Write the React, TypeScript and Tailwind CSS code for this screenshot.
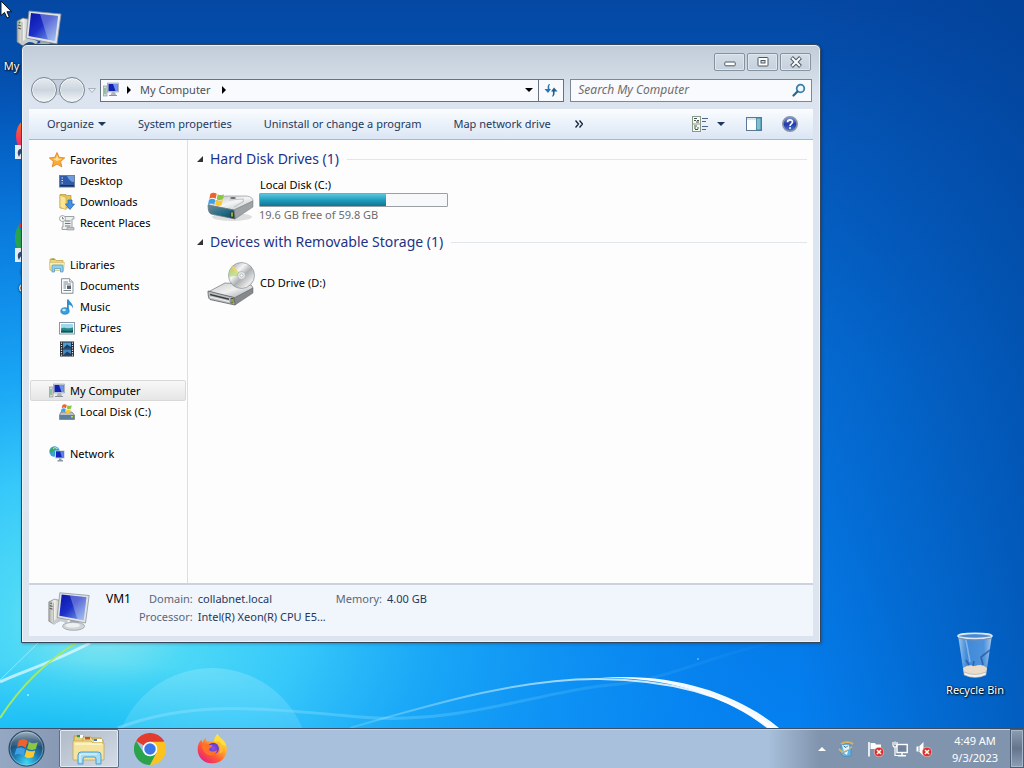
import React, { useState } from 'react';

interface IconProps {
  className?: string;
}

const WindowsFlag: React.FC = () => (
  <g>
    <path d="M2 4 C5 2 8 2 11 4 L9.500 11 C6.500 9 3.500 9 0.500 11 Z" fill="#f0622a" />
    <path d="M12.500 4.500 C15.500 6.500 18.500 6 21.500 4.500 L20 11.500 C17 13 14 13.500 11 11.500 Z" fill="#8dc63f" />
    <path d="M0 12.500 C3 10.500 6 10.500 9 12.500 L7.500 19.500 C4.500 17.500 1.500 17.500 -1.500 19.500 Z" fill="#3fa0e8" />
    <path d="M10.500 13 C13.500 15 16.500 14.500 19.500 13 L18 20 C15 21.500 12 22 9 20 Z" fill="#fcc830" />
  </g>
);

const ComputerIcon: React.FC<IconProps & { id: string }> = ({ className, id }) => (
  <svg viewBox="0 0 48 48" className={className} aria-hidden="true">
    <defs>
      <linearGradient id={`${id}-screen`} x1="0" y1="0" x2="1" y2="1">
        <stop offset="0" stopColor="#0a14a8" />
        <stop offset="0.450" stopColor="#1c30c8" />
        <stop offset="1" stopColor="#8ab4f0" />
      </linearGradient>
      <linearGradient id={`${id}-tower`} x1="0" y1="0" x2="1" y2="0">
        <stop offset="0" stopColor="#a8aaa4" />
        <stop offset="0.400" stopColor="#f2f2ec" />
        <stop offset="1" stopColor="#a4a8aa" />
      </linearGradient>
    </defs>
    <path d="M2 13 L8 10 L17 12 L17 32 L7 37 L2 34 Z" fill={`url(#${id}-tower)`} stroke="#777b7e" strokeWidth="0.700" />
    <path d="M7 14 V37" stroke="#909496" strokeWidth="0.700" />
    <path d="M3 17 L6 18 M3 20 L6 21" stroke="#555" strokeWidth="1.200" />
    <circle cx="4.500" cy="14.500" r="1" fill="#2f8f3f" />
    <path d="M7 37 C11 31 16 31 22 35" fill="none" stroke="#c6cbcf" strokeWidth="3.500" />
    <path d="M26 31 L34 33 L35 40 L24 39 Z" fill="#aab0b6" />
    <ellipse cx="29" cy="39.500" rx="12" ry="4.500" fill="#d0d5d9" stroke="#8c9196" strokeWidth="0.700" />
    <ellipse cx="28" cy="38.500" rx="8" ry="2.500" fill="#eef0f2" />
    <path d="M14 3 L46 6 L42 36 L11 30 Z" fill="#dfe3e8" stroke="#868d96" strokeWidth="0.800" />
    <path d="M16 5 L43 8 L40 33 L13.500 28 Z" fill={`url(#${id}-screen)`} />
    <path d="M25 6 L43 8 L40 33 L33 31.500 Z" fill="#fff" opacity="0.280" />
  </svg>
);

const SmallComputerIcon: React.FC<IconProps> = ({ className }) => (
  <svg viewBox="0 0 16 16" className={className} aria-hidden="true">
    <rect x="0.500" y="4" width="3.500" height="10" fill="#d4d8dc" stroke="#868c94" strokeWidth="0.600" />
    <path d="M2 6 V12" stroke="#39b54a" strokeWidth="1" />
    <rect x="4.500" y="1" width="11" height="9" fill="#cfd4dc" stroke="#7f8894" strokeWidth="0.500" />
    <rect x="5.500" y="2" width="9" height="7" fill="#1220b4" />
    <path d="M10 2 L14.500 2 L14.500 9 L12.500 9 Z" fill="#6f92ea" />
    <path d="M9 10 H12 L13 13 H7.500 Z" fill="#aeb6be" />
    <path d="M6 13.500 H14" stroke="#89929b" strokeWidth="1" />
  </svg>
);

const StarIcon: React.FC<IconProps> = ({ className }) => (
  <svg viewBox="0 0 16 16" className={className} aria-hidden="true">
    <path d="M8 0.500 L10.200 5.300 L15.700 5.900 L11.600 9.500 L12.800 14.900 L8 12.100 L3.200 14.900 L4.400 9.500 L0.300 5.900 L5.800 5.300 Z" fill="#fbac34" stroke="#d9812a" strokeWidth="0.800" />
    <path d="M8 3 L9.500 6.500 L13 7 L8 9 L4 7 L7 6.300 Z" fill="#ffe39a" />
  </svg>
);

const DesktopIcon: React.FC<IconProps> = ({ className }) => (
  <svg viewBox="0 0 16 16" className={className} aria-hidden="true">
    <rect x="0.500" y="2.500" width="15" height="11.500" fill="#2f5ba8" stroke="#6d7f99" />
    <path d="M8 3 H15 V9 C12 9 10 7 8 3 Z" fill="#6d9be0" />
    <path d="M2.500 5 H4 M2.500 7.500 H4 M2.500 10 H4" stroke="#d4e4fa" />
    <rect x="1" y="12" width="14" height="1.500" fill="#1d2f58" />
  </svg>
);

const DownloadsIcon: React.FC<IconProps> = ({ className }) => (
  <svg viewBox="0 0 16 16" className={className} aria-hidden="true">
    <path d="M1 0.500 H7 V1.500 H12 V14 H1 Z" fill="#e5c65c" stroke="#b8932e" strokeWidth="0.700" />
    <path d="M1 1 L7 3.500 V15.500 L1 13.500 Z" fill="#fae595" stroke="#c29d3c" strokeWidth="0.600" />
    <path d="M9 6 H13 V10 H15.500 L11 15.500 L6.500 10 H9 Z" fill="#3f93e6" stroke="#1f62b0" strokeWidth="0.700" />
  </svg>
);

const RecentIcon: React.FC<IconProps> = ({ className }) => (
  <svg viewBox="0 0 16 16" className={className} aria-hidden="true">
    <path d="M4 1.500 H15 V4 H13 V14.500 H3 V12 H4 Z" fill="#eef0f0" stroke="#868d90" strokeWidth="0.800" />
    <path d="M6 6 H11.500 M6 8.500 H11.500 M6 11 H11.500" stroke="#6f777c" />
    <path d="M8 12.500 H15 V15 H8 Z" fill="#c3c8ca" stroke="#868d90" strokeWidth="0.600" />
    <circle cx="3.500" cy="3.500" r="3" fill="#fafafa" stroke="#8e9598" strokeWidth="0.800" />
    <path d="M3.500 1.800 V3.800 H5" fill="none" stroke="#555" strokeWidth="0.700" />
  </svg>
);

const LibrariesIcon: React.FC<IconProps> = ({ className }) => (
  <svg viewBox="0 0 16 16" className={className} aria-hidden="true">
    <path d="M1 2 H6 L7 3.500 H14 V13 H1 Z" fill="#eed67c" stroke="#bb9b45" strokeWidth="0.700" />
    <rect x="2.500" y="1.500" width="3" height="1.500" fill="#6cb24a" />
    <path d="M0.500 5.500 H15.500 L14.500 13.500 H1.500 Z" fill="#fbeeb0" stroke="#cbb160" strokeWidth="0.500" />
    <path d="M3 15 V9 Q3 8 4 8 H13 Q14 8 14 9 V15 H11.500 V11.500 H5.500 V15 Z" fill="#8fd0ee" stroke="#4597c4" strokeWidth="0.700" />
  </svg>
);

const DocumentsIcon: React.FC<IconProps> = ({ className }) => (
  <svg viewBox="0 0 16 16" className={className} aria-hidden="true">
    <path d="M2.500 0.700 H10.500 L14 4 V15.300 H2.500 Z" fill="#fbfcfd" stroke="#7d8790" strokeWidth="0.900" />
    <path d="M10.500 0.700 V4 H14" fill="#dde3e8" stroke="#7d8790" strokeWidth="0.700" />
    <path d="M4.500 4 H9 M4.500 6 H12 M4.500 8 H7 M4.500 10 H7 M4.500 12.500 H12" stroke="#6c7884" strokeWidth="0.900" />
    <rect x="8" y="7.500" width="4" height="3.500" fill="#59636e" />
  </svg>
);

const MusicIcon: React.FC<IconProps> = ({ className }) => (
  <svg viewBox="0 0 16 16" className={className} aria-hidden="true">
    <path d="M8 0.500 H9.800 C10.200 3.200 14.500 4 14 9.500 C13 6.800 11.500 6 9.800 5.700 V12 H8 Z" fill="#2b8fd0" />
    <ellipse cx="6" cy="12" rx="4.200" ry="3.300" fill="#35a0dd" stroke="#1b6ea6" strokeWidth="0.600" />
    <ellipse cx="5" cy="11" rx="1.800" ry="1.200" fill="#bfe6fa" />
  </svg>
);

const PicturesIcon: React.FC<IconProps> = ({ className }) => (
  <svg viewBox="0 0 16 16" className={className} aria-hidden="true">
    <rect x="0.500" y="2.500" width="15" height="11.500" fill="#fff" stroke="#8a98a5" />
    <rect x="2" y="4" width="12" height="8.500" fill="#9fd8ee" />
    <path d="M2 8.500 C5 6.500 8 9.500 14 7.500 V12.500 H2 Z" fill="#2a8a86" />
    <path d="M2 11 C6 9.500 10 12 14 10 V12.500 H2 Z" fill="#12585e" />
  </svg>
);

const VideosIcon: React.FC<IconProps> = ({ className }) => (
  <svg viewBox="0 0 16 16" className={className} aria-hidden="true">
    <rect x="1" y="0.500" width="14" height="15" fill="#242a33" />
    <rect x="4" y="1.500" width="8" height="6" fill="#4f9bd2" />
    <rect x="4" y="8.500" width="8" height="6" fill="#4688be" />
    <path d="M4 7.500 L8 3.500 L12 6 V7.500 Z M4 14.500 L8 10.500 L12 13 V14.500 Z" fill="#1f3f66" />
    <path d="M2.500 1.500 V15 M13.500 1.500 V15" stroke="#e6ebf0" strokeWidth="1.200" strokeDasharray="1.200 1.200" />
  </svg>
);

const SmallDriveIcon: React.FC<IconProps> = ({ className }) => (
  <svg viewBox="0 0 16 16" className={className} aria-hidden="true">
    <path d="M2 8 H13 L15.500 11 V15.500 H0.500 V11 Z" fill="#b9c0c7" stroke="#6b747d" strokeWidth="0.700" />
    <rect x="0.800" y="11" width="14.400" height="4.200" fill="#5c7f9c" />
    <rect x="12" y="12" width="2" height="1.500" fill="#b8e04a" />
    <g transform="translate(2.500 -1) scale(0.480)">
      <WindowsFlag />
    </g>
  </svg>
);

const NetworkIcon: React.FC<IconProps> = ({ className }) => (
  <svg viewBox="0 0 16 16" className={className} aria-hidden="true">
    <circle cx="5.500" cy="5.500" r="5.200" fill="#3aa4d8" />
    <path d="M1 4 C3 1 6 0 8 1.500 C7 4 4 4 3 7 C1.500 7 1 5.500 1 4 Z" fill="#3fa65a" />
    <path d="M4 2.500 C6 1 8 2 8.500 3" fill="none" stroke="#d9f3fb" />
    <rect x="6" y="4.500" width="9.700" height="8" fill="#c8cfd8" />
    <rect x="7" y="5.300" width="7.800" height="6.200" fill="#1426b8" />
    <path d="M11 5.300 H14.800 V11.500 H13 Z" fill="#5c84e4" />
    <path d="M10 12.500 H12.500 V14 H14 V15.500 H8.500 V14 H10 Z" fill="#8e98a2" />
  </svg>
);

const HardDriveIcon: React.FC<IconProps> = ({ className }) => (
  <svg viewBox="0 0 48 48" className={className} aria-hidden="true">
    <defs>
      <linearGradient id="hdd-top" x1="0" y1="0" x2="1" y2="1">
        <stop offset="0" stopColor="#b8bcbe" />
        <stop offset="0.500" stopColor="#f4f5f5" />
        <stop offset="1" stopColor="#b9bdbf" />
      </linearGradient>
      <linearGradient id="hdd-front" x1="0" y1="0" x2="1" y2="1">
        <stop offset="0" stopColor="#6f8c96" />
        <stop offset="0.600" stopColor="#1f6a86" />
        <stop offset="1" stopColor="#1c3c48" />
      </linearGradient>
    </defs>
    <ellipse cx="25" cy="41" rx="20" ry="4" fill="#000" opacity="0.120" />
    <path d="M1 29 L18 20 L40 20 Q46 21 46 25 L27 34 Z" fill="url(#hdd-top)" stroke="#858b8e" strokeWidth="0.600" />
    <path d="M46 25 L46 31 L28 43 L27 34 Z" fill="#9ea3a6" stroke="#75797c" strokeWidth="0.500" />
    <path d="M1 29 L27 34 L28 43 L4 38 Q1 37 1 29 Z" fill="url(#hdd-front)" stroke="#6a7479" strokeWidth="0.700" />
    <path d="M22 24 L36 23 Q38 25 34 27 L27 31" fill="none" stroke="#c2c6c8" strokeWidth="1.200" />
    <rect x="24" y="36" width="2" height="5" fill="#c4e24e" stroke="#222" strokeWidth="0.600" />
    <ellipse cx="26" cy="22" rx="3" ry="1" fill="#66696c" />
    <g transform="translate(2 15) scale(0.700)">
      <WindowsFlag />
    </g>
  </svg>
);

const CdDriveIcon: React.FC<IconProps> = ({ className }) => (
  <svg viewBox="0 0 48 48" className={className} aria-hidden="true">
    <defs>
      <linearGradient id="cd-disc" x1="0" y1="0" x2="1" y2="1">
        <stop offset="0" stopColor="#8e9395" />
        <stop offset="0.350" stopColor="#f4f5f5" />
        <stop offset="0.550" stopColor="#acb0b2" />
        <stop offset="0.800" stopColor="#ebebeb" />
        <stop offset="1" stopColor="#94989a" />
      </linearGradient>
      <linearGradient id="cd-body" x1="0" y1="0" x2="1" y2="1">
        <stop offset="0" stopColor="#c4c7c8" />
        <stop offset="0.500" stopColor="#f0f0f0" />
        <stop offset="1" stopColor="#989c9e" />
      </linearGradient>
    </defs>
    <path d="M1 33 L18 24 L40 25 Q46 26 46 29 L28 39 Z" fill="url(#cd-body)" stroke="#75797b" strokeWidth="0.700" />
    <circle cx="34.500" cy="16.500" r="13" fill="url(#cd-disc)" stroke="#8b8f91" strokeWidth="0.700" />
    <path d="M34.500 16.500 L24 9 A13 13 0 0 0 22 17.500 Z" fill="#b4dc62" opacity="0.700" />
    <path d="M34.500 16.500 L24 9 L26 6.500 Z" fill="#f0d44c" opacity="0.800" />
    <circle cx="34.500" cy="16.500" r="4" fill="#e3e5e6" stroke="#9fa3a5" strokeWidth="0.600" />
    <circle cx="34.500" cy="16.500" r="1.500" fill="#fff" stroke="#909496" strokeWidth="0.500" />
    <path d="M46 29 L46 34 L28 46 L27 39 Z" fill="#85898b" stroke="#606466" strokeWidth="0.500" />
    <path d="M1 32 L27 38.500 L28 46 L3 40.500 Q1 39.500 1 32 Z" fill="#bcbfc0" stroke="#5a5d5f" strokeWidth="0.800" />
    <path d="M3 35.500 L22 40.300" stroke="#3d4143" strokeWidth="1.400" />
    <path d="M3 38 L22 42.500" stroke="#f4f4f4" strokeWidth="1.200" />
    <rect x="24" y="39.500" width="2" height="4.500" fill="#c9d84e" stroke="#222" strokeWidth="0.600" />
  </svg>
);

const RecycleBinIcon: React.FC<IconProps> = ({ className }) => (
  <svg viewBox="0 0 48 48" className={className} aria-hidden="true">
    <defs>
      <linearGradient id="bin-glass" x1="0" y1="0" x2="1" y2="0">
        <stop offset="0" stopColor="#cfe4f8" stopOpacity="0.800" />
        <stop offset="0.250" stopColor="#6aa4e4" stopOpacity="0.600" />
        <stop offset="0.750" stopColor="#7fb2ea" stopOpacity="0.600" />
        <stop offset="1" stopColor="#d6e8fa" stopOpacity="0.800" />
      </linearGradient>
    </defs>
    <path d="M7 3 L13 43 Q24 48 35 43 L41 3 Z" fill="url(#bin-glass)" />
    <path d="M12 36 Q17 32 24 34 Q31 31 36 36 L35 42 Q24 47 13 42 Z" fill="#e9dccb" />
    <path d="M13 40 Q24 45 35 40 L35 43 Q24 48 13 43 Z" fill="#f2f2ef" stroke="#999" strokeWidth="0.500" />
    <path d="M15 28 L18 33 M22 34 L23 29 M32 33 L30 25 L39 18" fill="none" stroke="#24509c" strokeWidth="1.600" opacity="0.700" />
    <path d="M15 8 L19 30" stroke="#fff" strokeWidth="1.500" opacity="0.350" />
    <ellipse cx="24" cy="4" rx="17" ry="2.600" fill="#4c86cc" fillOpacity="0.600" stroke="#dfe9f2" strokeWidth="1.600" />
    <path d="M7.500 6 Q24 10 40.500 6" fill="none" stroke="#7c8fa2" strokeWidth="1" />
  </svg>
);

const ChromeIcon: React.FC<IconProps> = ({ className }) => (
  <svg viewBox="0 0 48 48" className={className} aria-hidden="true">
    <path d="M24 24 L3.200 12 A24 24 0 0 1 44.800 12 Z" fill="#e33b2e" />
    <path d="M24 13 H45.300 L44 10 H24 Z" fill="#e33b2e" />
    <path d="M24 13 H45.300 A24 24 0 0 1 24 48 L33.500 29.500 Z" fill="#fcc31e" />
    <path d="M14.500 29.500 L3.200 12 A24 24 0 0 0 24 48 L33.500 29.500 Z" fill="#2ba24c" />
    <circle cx="24" cy="24" r="11" fill="#fff" />
    <circle cx="24" cy="24" r="8.600" fill="#3a78e8" />
  </svg>
);

const FirefoxIcon: React.FC<IconProps & { id: string }> = ({ className, id }) => (
  <svg viewBox="0 0 48 48" className={className} aria-hidden="true">
    <defs>
      <linearGradient id={`${id}-fox`} x1="0.900" y1="0.100" x2="0.200" y2="0.950">
        <stop offset="0" stopColor="#ffe83c" />
        <stop offset="0.350" stopColor="#ffab2a" />
        <stop offset="0.650" stopColor="#ff5a36" />
        <stop offset="1" stopColor="#ea2078" />
      </linearGradient>
      <radialGradient id={`${id}-globe`}>
        <stop offset="0" stopColor="#8a52f0" />
        <stop offset="1" stopColor="#5f3ac8" />
      </radialGradient>
    </defs>
    <path d="M32 1 C34 8 44 10 46 22 C48 36 37 47 24 47 C11 47 1 38 1 25 C1 19 3 14 7 10 L8 15 L13 7 L15 13 C19 12 23 13 26 14 C26 9 29 4 32 1 Z" fill={`url(#${id}-fox)`} />
    <path d="M32 1 C34 8 44 10 45 20 C39 20 34 13 27 14 C26 9 29 4 32 1 Z" fill="#ffdf3e" />
    <circle cx="25" cy="24" r="9" fill={`url(#${id}-globe)`} />
    <path d="M7 17 C12 15 16 16 19 19 C23 18 26 20 22 22 C18 24 18 27 21 28 C25 30 29 28 31 26 C30 35 20 37 14 32 C9 28 8 23 7 17 Z" fill="#ff7228" />
    <path d="M28 13 C36 16 39 25 34 33 C42 29 42 18 34 13 Z" fill="#ffc038" />
  </svg>
);

const ExplorerIcon: React.FC<IconProps> = ({ className }) => (
  <svg viewBox="0 0 36 32" className={className} aria-hidden="true">
    <path d="M3 3 H12 L14 5 H30 V14 H3 Z" fill="#e6cf7c" stroke="#a98d3c" strokeWidth="0.700" />
    <rect x="6" y="2" width="6" height="3" fill="#fff" />
    <rect x="6" y="2" width="3" height="2.500" fill="#2f9a3c" />
    <path d="M12 4 H20 L22 7 H32 V17 H12 Z" fill="#f1dc90" stroke="#b1974a" strokeWidth="0.700" />
    <rect x="14" y="4" width="5" height="2.500" fill="#c4532c" />
    <rect x="23" y="6" width="8" height="3" fill="#fff" />
    <rect x="23" y="6" width="3" height="2" fill="#3c78c4" />
    <path d="M2 8 H20 L22 10 H33 V27 H2 Z" fill="#f6e49c" stroke="#c2a854" strokeWidth="0.800" />
    <path d="M4 11 H31" stroke="#fdf7d6" strokeWidth="1.500" />
    <path d="M7 31 V22 Q7 19 10 19 H27 Q30 19 30 22 V31 H25 V26 Q25 24 23 24 H14 Q12 24 12 26 V31 Z" fill="#a6dcf4" stroke="#4a9ecb" strokeWidth="1" />
    <path d="M9 29 V22 Q9 21 11 21 H26" fill="none" stroke="#e7f7fd" strokeWidth="1.200" />
  </svg>
);

const StartOrb: React.FC<IconProps> = ({ className }) => (
  <svg viewBox="0 0 40 40" className={className} aria-hidden="true">
    <defs>
      <radialGradient id="orb" cx="0.500" cy="0.900" r="0.900">
        <stop offset="0" stopColor="#3fd8f4" />
        <stop offset="0.400" stopColor="#1c7cb4" />
        <stop offset="0.750" stopColor="#1c4468" />
        <stop offset="1" stopColor="#4d6d8c" />
      </radialGradient>
      <linearGradient id="orb-shine" x1="0" y1="0" x2="0" y2="1">
        <stop offset="0" stopColor="#fff" stopOpacity="0.750" />
        <stop offset="1" stopColor="#fff" stopOpacity="0.100" />
      </linearGradient>
    </defs>
    <circle cx="20" cy="20" r="19" fill="url(#orb)" stroke="#28405a" strokeWidth="1" />
    <circle cx="20" cy="20" r="17.800" fill="none" stroke="#b5dcf0" strokeWidth="0.700" opacity="0.700" />
    <path d="M3 18 A17 16 0 0 1 37 18 Q20 12 3 18 Z" fill="url(#orb-shine)" opacity="0.600" />
    <g transform="translate(10 7) rotate(4) scale(1.050)">
      <WindowsFlag />
    </g>
  </svg>
);

const Arrow: React.FC<IconProps> = ({ className }) => (
  <svg viewBox="0 0 8 4" className={className} aria-hidden="true">
    <path d="M0 0 H8 L4 4 Z" fill="currentColor" />
  </svg>
);

const RightArrow: React.FC = () => (
  <svg viewBox="0 0 4 8" className="h-2 w-1" aria-hidden="true">
    <path d="M0 0 L4 4 L0 8 Z" fill="#000" />
  </svg>
);

const Shortcut: React.FC = () => (
  <svg viewBox="0 0 14 14" className="absolute bottom-0 left-0 size-3.5" aria-hidden="true">
    <rect width="14" height="14" fill="#e6ebf2" />
    <path d="M4 12 C1 6 4 3 8 4 V2 L12.500 6 L8 10 V7.500 C6 7.500 5 9 4 12 Z" fill="#2c4a74" />
  </svg>
);

const Wallpaper: React.FC = () => (
  <svg viewBox="0 0 1024 728" preserveAspectRatio="none" className="absolute inset-0 h-full w-full" aria-hidden="true">
    <defs>
      <linearGradient id="sky" x1="0" y1="0" x2="0" y2="1">
        <stop offset="0" stopColor="#0448a4" />
        <stop offset="0.200" stopColor="#0458ba" />
        <stop offset="0.500" stopColor="#046cd4" />
        <stop offset="1" stopColor="#0480f0" />
      </linearGradient>
      <radialGradient id="glow" gradientUnits="userSpaceOnUse" cx="0" cy="0" r="1" gradientTransform="translate(100 620) scale(720 540)">
        <stop offset="0" stopColor="#90e8ee" />
        <stop offset="0.130" stopColor="#4cd8f6" />
        <stop offset="0.280" stopColor="#36c8fa" />
        <stop offset="0.460" stopColor="#1cacf8" stopOpacity="0.900" />
        <stop offset="0.750" stopColor="#1098f8" stopOpacity="0.450" />
        <stop offset="1" stopColor="#0480f0" stopOpacity="0" />
      </radialGradient>
      <linearGradient id="shade" x1="0" y1="0" x2="1" y2="0">
        <stop offset="0.780" stopColor="#003c90" stopOpacity="0" />
        <stop offset="1" stopColor="#003c90" stopOpacity="0.500" />
      </linearGradient>
      <radialGradient id="floor" gradientUnits="userSpaceOnUse" cx="0" cy="0" r="1" gradientTransform="translate(60 740) scale(260 80)">
        <stop offset="0" stopColor="#00b4f4" stopOpacity="0.700" />
        <stop offset="1" stopColor="#00b4f4" stopOpacity="0" />
      </radialGradient>
      <linearGradient id="beam" x1="0" y1="0" x2="1" y2="0">
        <stop offset="0" stopColor="#bdeeff" stopOpacity="0.200" />
        <stop offset="0.600" stopColor="#e4f8ff" stopOpacity="0.800" />
        <stop offset="1" stopColor="#fff" />
      </linearGradient>
      <linearGradient id="bubble" x1="0" y1="0" x2="0" y2="1">
        <stop offset="0" stopColor="#d4fbff" stopOpacity="0.220" />
        <stop offset="0.600" stopColor="#d4fbff" stopOpacity="0.050" />
      </linearGradient>
      <linearGradient id="haze" x1="0" y1="0" x2="1" y2="0">
        <stop offset="0" stopColor="#8ce0ff" stopOpacity="0.500" />
        <stop offset="1" stopColor="#8ce0ff" stopOpacity="0" />
      </linearGradient>
    </defs>
    <rect width="1024" height="728" fill="url(#sky)" />
    <rect width="1024" height="728" fill="url(#glow)" />
    <rect width="1024" height="728" fill="url(#floor)" />
    <rect width="1024" height="728" fill="url(#shade)" />
    <circle cx="212" cy="766" r="98" fill="url(#bubble)" />
    <path d="M118 728 C190 700 260 708 360 717 C460 726 540 690 620 684 C680 676 720 650 800 638" fill="none" stroke="url(#haze)" strokeWidth="3" />
    <path d="M350 728 C430 705 520 678 600 679 C680 680 735 700 772 728" fill="none" stroke="url(#beam)" strokeWidth="2" />
    <path d="M600 678 C674 676 732 700 767 728 H779 C738 694 674 672 600 678 Z" fill="#fff" opacity="0.950" />
    <path d="M0 682 C20 672 50 664 90 643" fill="none" stroke="#e8fcff" strokeWidth="3" opacity="0.700" />
    <path d="M0 718 C18 690 42 664 76 643" fill="none" stroke="#a4ea64" strokeWidth="2" />
    <path d="M0 680 L38 643" stroke="#c4f6ff" strokeWidth="1" opacity="0.600" />
    <circle cx="28" cy="695" r="1" fill="#a4f0ff" />
    <circle cx="698" cy="659" r="1" fill="#5cb8ff" />
  </svg>
);

interface DesktopItemProps {
  label: string;
  shortcut?: boolean;
  children: React.ReactNode;
}

const DesktopItem: React.FC<DesktopItemProps> = ({ label, shortcut, children }) => (
  <button className="flex h-[103px] w-[74px] flex-col items-center gap-0.5 text-[11px] leading-4 text-white [text-shadow:1px_1px_2px_#000,0_0_2px_#000]">
    <span className="relative size-12 shrink-0">
      {children}
      {shortcut && <Shortcut />}
    </span>
    <span>{label}</span>
  </button>
);

const navGroups = [
  [
    { label: 'Favorites', icon: StarIcon },
    { label: 'Desktop', icon: DesktopIcon, child: true },
    { label: 'Downloads', icon: DownloadsIcon, child: true },
    { label: 'Recent Places', icon: RecentIcon, child: true },
  ],
  [
    { label: 'Libraries', icon: LibrariesIcon },
    { label: 'Documents', icon: DocumentsIcon, child: true },
    { label: 'Music', icon: MusicIcon, child: true },
    { label: 'Pictures', icon: PicturesIcon, child: true },
    { label: 'Videos', icon: VideosIcon, child: true },
  ],
  [
    { label: 'My Computer', icon: SmallComputerIcon },
    { label: 'Local Disk (C:)', icon: SmallDriveIcon, child: true },
  ],
  [{ label: 'Network', icon: NetworkIcon }],
];

const Sidebar: React.FC = () => {
  const [selected, setSelected] = useState('My Computer');

  return (
    <nav className="flex w-[159px] shrink-0 flex-col gap-[21px] border-r border-[#d6e0ec] px-px pt-[9px]">
      {navGroups.map((group) => (
        <ul key={group[0].label}>
          {group.map(({ label, icon: Icon, child }) => (
            <li key={label}>
              <button
                onClick={() => setSelected(label)}
                className={`flex h-[21px] w-full items-center gap-[5px] rounded-[2px] border text-left leading-4 text-black ${child ? 'pl-7' : 'pl-[18px]'} ${
                  selected === label ? 'border-[#d9d9d9] bg-linear-to-b from-[#f8f8f8] to-[#e6e6e6]' : 'border-transparent'
                }`}
              >
                <Icon className="size-4" />
                <span className="pt-px">{label}</span>
              </button>
            </li>
          ))}
        </ul>
      ))}
    </nav>
  );
};

const SectionHeader: React.FC<{ title: string }> = ({ title }) => (
  <div className="mb-0.5 flex h-6 items-center">
    <svg viewBox="0 0 6 6" className="mr-[7px] size-1.5" aria-hidden="true">
      <path d="M6 0 V6 H0 Z" fill="#333" />
    </svg>
    <h2 className="text-[14px] leading-5 text-[#1e3287]">{title}</h2>
    <span className="ml-2 h-px flex-1 bg-[#e2e6ea]" />
  </div>
);

const Toolbar: React.FC = () => (
  <div className="mt-1.5 flex h-[31px] shrink-0 items-center border-b border-[#a9b8ca] bg-linear-to-b from-[#fbfdff] via-[#eaf1fa] to-[#dbe6f4] pr-[15px] pl-[18px] text-[#1e395b]">
    <div className="flex flex-1 items-center gap-8 whitespace-nowrap">
      <button className="flex items-center gap-1">
        Organize
        <Arrow className="h-1 w-2" />
      </button>
      <button>System properties</button>
      <button>Uninstall or change a program</button>
      <button>Map network drive</button>
      <button aria-label="More commands" className="-ml-2">
        <svg viewBox="0 0 8 8" className="size-2" aria-hidden="true">
          <path d="M0.500 0.500 L3.500 4 L0.500 7.500 M4.500 0.500 L7.500 4 L4.500 7.500" fill="none" stroke="#1b2a40" strokeWidth="1.400" />
        </svg>
      </button>
    </div>
    <button aria-label="Change your view">
      <svg viewBox="0 0 16 16" className="size-4" aria-hidden="true">
        <rect x="0.500" y="0.500" width="8" height="15" fill="#f6faf4" stroke="#8a9a88" />
        <path d="M2 4.500 H4 M5 4.500 H7 M2 12 H4 M5 12 H7 M2 2.500 H5 M2 10 H5 M4 6 H7 M3 13.500 H6" stroke="#46544a" />
        <path d="M0.500 8 H8.500" stroke="#8a9a88" />
        <path d="M10 2.500 H16 M10 5.500 H14 M10 10.500 H16 M10 13.500 H14" stroke="#4c6690" />
      </svg>
    </button>
    <button aria-label="More view options" className="ml-[9px]">
      <Arrow className="h-1 w-2" />
    </button>
    <button aria-label="Show the preview pane" className="ml-[21px]">
      <svg viewBox="0 0 16 14" className="h-3.5 w-4" aria-hidden="true">
        <rect x="0.500" y="0.500" width="15" height="13" fill="#fcfeff" stroke="#5a7896" />
        <path d="M1 2 H10" stroke="#b6cbe0" />
        <rect x="10.500" y="1" width="4.500" height="12" fill="#7cc0d4" stroke="#3f7c94" strokeWidth="0.800" />
      </svg>
    </button>
    <button aria-label="Get help" className="ml-5">
      <svg viewBox="0 0 16 16" className="size-4" aria-hidden="true">
        <defs>
          <linearGradient id="help" x1="0" y1="0" x2="0" y2="1">
            <stop offset="0" stopColor="#7f9ce0" />
            <stop offset="0.500" stopColor="#2438a4" />
            <stop offset="1" stopColor="#4a7ce0" />
          </linearGradient>
        </defs>
        <circle cx="8" cy="8" r="7.200" fill="url(#help)" stroke="#8b95a8" strokeWidth="1.600" />
        <path d="M5.500 6.300 C5.500 3 10.500 3.200 10.500 6 C10.500 8 8 7.800 8 10" fill="none" stroke="#fff" strokeWidth="1.600" />
        <circle cx="8" cy="12" r="1" fill="#fff" />
      </svg>
    </button>
  </div>
);

const navButtonClass =
  'relative size-[26px] rounded-full border border-[#76828f] bg-linear-to-b from-[#e6ebf0] via-[#ccd5de] to-[#f2f6f9] shadow-[inset_0_0_0_1px_#f3f6f9]';

const AddressRow: React.FC = () => {
  const [query, setQuery] = useState('');

  return (
    <div className="flex h-[26px] shrink-0 items-center pr-px pl-0.5">
      <div className="relative flex gap-0.5">
        <span className="absolute inset-x-3 top-0.5 h-4 border-t border-[#9aa7b5] bg-[#c4cfdb]" />
        <button aria-label="Back" className={navButtonClass} />
        <button aria-label="Forward" className={navButtonClass} />
      </div>
      <button aria-label="Recent pages" className="ml-[3px]">
        <svg viewBox="0 0 8 5" className="h-[5px] w-2" aria-hidden="true">
          <path d="M0.500 0.500 H7.500 L4 4.500 Z" fill="#e8eef4" stroke="#9aa6b4" strokeWidth="0.800" />
        </svg>
      </button>
      <div className="ml-1 flex h-[23px] flex-[67] items-center border border-[#66727f] bg-[#f8fafd]">
        <div className="flex flex-1 items-center pl-[2px] text-[#4a5058]">
          <SmallComputerIcon className="size-4" />
          <span className="ml-2">
            <RightArrow />
          </span>
          <button className="ml-[9px]">My Computer</button>
          <span className="ml-[11px]">
            <RightArrow />
          </span>
        </div>
        <button aria-label="Previous locations" className="pr-[5px] text-black">
          <Arrow className="h-1 w-2" />
        </button>
        <button aria-label="Refresh" className="flex h-full w-[25px] items-center justify-center border-l border-[#66727f]">
          <svg viewBox="0 0 14 14" className="size-3.5" aria-hidden="true">
            <path d="M5 1 C3.500 2 3.500 4 3.800 6 H0.500 L4 10 L7 6 H5.500 C5 4 5 2.500 6 1 Z" fill="#2a74b8" />
            <path d="M9 13.500 C10.500 12.500 10.800 10.500 10.500 8.500 H13.500 L10 4.500 L7 8.500 H8.800 C9.200 10.500 9 12 8 13.500 Z" fill="#1f5f8e" />
          </svg>
        </button>
      </div>
      <div className="ml-1.5 flex h-[23px] flex-[33] items-center border border-[#7c8896] bg-[#f8fafd] pr-[5px] pl-[7px]">
        <input
          type="search"
          aria-label="Search My Computer"
          placeholder="Search My Computer"
          value={query}
          onChange={(e) => setQuery(e.target.value)}
          className="min-w-0 flex-1 bg-transparent text-[12px] text-black outline-none placeholder:text-[#6d6d6d] placeholder:italic"
        />
        <svg viewBox="0 0 14 14" className="size-3.5" aria-hidden="true">
          <circle cx="8.500" cy="5.500" r="3.800" fill="#eef8fc" stroke="#3b7fa8" strokeWidth="1.800" />
          <path d="M5.500 8.500 L1.500 12.500" stroke="#2c6288" strokeWidth="2.200" strokeLinecap="round" />
        </svg>
      </div>
    </div>
  );
};

const captionClass =
  'flex h-[18px] w-[31px] items-center justify-center rounded-[2px] border border-[#8592a0] bg-linear-to-b from-[#d3dde7] to-[#c6d1dd] shadow-[inset_0_0_0_1px_#dfe7ee]';

const ExplorerWindow: React.FC = () => (
  <section
    aria-label="My Computer"
    className="absolute top-[44px] right-[203px] bottom-[85px] left-[21px] flex flex-col rounded-t-[6px] border border-[#34465a] bg-[#dce5ef] bg-linear-to-b from-[#c0ccd8] to-[#dce5ef] to-[50px] px-[7px] pb-1.5 shadow-[inset_0_0_0_1px_#eef3f8,1px_1px_3px_rgba(0,20,60,0.3)]"
  >
    <div className="flex h-8 shrink-0 justify-end gap-0.5 pt-2 pr-0.5">
      <button aria-label="Minimize" className={captionClass}>
        <svg viewBox="0 0 12 12" className="size-3" aria-hidden="true">
          <rect x="0.800" y="6" width="10.400" height="3.800" rx="0.800" fill="#fff" stroke="#4d5866" />
        </svg>
      </button>
      <button aria-label="Maximize" className={captionClass}>
        <svg viewBox="0 0 12 12" className="size-3" aria-hidden="true">
          <rect x="1" y="1.500" width="10" height="8.500" rx="0.800" fill="#fff" stroke="#4d5866" />
          <rect x="4" y="4.500" width="4" height="2.500" fill="#d4dde6" stroke="#4d5866" />
        </svg>
      </button>
      <button aria-label="Close" className={captionClass}>
        <svg viewBox="0 0 12 12" className="size-3" aria-hidden="true">
          <path d="M1.500 1.500 L10.500 10.500 M10.500 1.500 L1.500 10.500" stroke="#4d5866" strokeWidth="4" />
          <path d="M2 2 L10 10 M10 2 L2 10" stroke="#fff" strokeWidth="2" />
        </svg>
      </button>
    </div>
    <AddressRow />
    <Toolbar />
    <div className="flex min-h-0 flex-1 bg-[#fdfdfe]">
      <Sidebar />
      <main className="flex-1 pt-[7px] pr-1.5 pl-[9px]">
        <SectionHeader title="Hard Disk Drives (1)" />
        <div className="mb-[3px] flex h-[54px] items-center gap-1 pl-[10px]">
          <HardDriveIcon className="size-12" />
          <div className="w-[189px]">
            <p className="px-px leading-4 text-black">Local Disk (C:)</p>
            <div role="meter" aria-label="Used space" aria-valuemin={0} aria-valuemax={598} aria-valuenow={402} className="h-[14px] rounded-[1px] border border-[#999fa5] bg-[#f7f8f9]">
              <div className="h-full bg-linear-to-b from-[#58c6dd] via-[#1f9dbb] via-50% to-[#0d7795]" style={{ width: `${(40.2 / 59.8) * 100}%` }} />
            </div>
            <p className="leading-4 text-[#6d6d6d]">19.6 GB free of 59.8 GB</p>
          </div>
        </div>
        <SectionHeader title="Devices with Removable Storage (1)" />
        <div className="flex h-[54px] items-center gap-1 pl-[10px]">
          <CdDriveIcon className="size-12" />
          <p className="px-px text-black">CD Drive (D:)</p>
        </div>
      </main>
    </div>
    <footer className="flex h-[53px] shrink-0 items-start border-t-2 border-[#cbd3de] bg-[#f1f5fc] pt-[5px] pl-[18px]">
      <ComputerIcon id="details" className="size-11" />
      <p className="ml-[15px] text-[12px] leading-[18px] text-black">VM1</p>
      <dl className="ml-2 grid grid-cols-[auto_133px_auto_auto] gap-x-[5px] leading-[18px]">
        <dt className="text-right text-[#5a6779]">Domain:</dt>
        <dd className="text-[#1e395b]">collabnet.local</dd>
        <dt className="text-[#5a6779]">Memory:</dt>
        <dd className="text-[#1e395b]">4.00 GB</dd>
        <dt className="text-right text-[#5a6779]">Processor:</dt>
        <dd className="text-[#1e395b]">Intel(R) Xeon(R) CPU E5...</dd>
      </dl>
    </footer>
  </section>
);

const ErrorBadge: React.FC = () => (
  <g>
    <circle cx="11" cy="11" r="4.800" fill="#d8322c" stroke="#f6d5d2" strokeWidth="0.600" />
    <path d="M9 9 L13 13 M13 9 L9 13" stroke="#fff" strokeWidth="1.500" />
  </g>
);

const Taskbar: React.FC = () => (
  <footer className="flex h-10 shrink-0 items-stretch border-t border-[#3c4f66] bg-linear-to-r from-[#a8c0dc] from-75% to-[#8194ad] to-80% shadow-[inset_0_1px_0_#c4d4e8]">
    <button aria-label="Start" className="flex w-[59px] items-center bg-linear-to-r from-[#95a8c3] to-[#8799b4] pl-2">
      <StartOrb className="size-[37px]" />
    </button>
    <button aria-label="Windows Explorer" className="flex w-[60px] items-center justify-center rounded-[2px] border border-[#5c6f88] bg-linear-to-br from-[#b0bac8] to-[#d3dce7] shadow-[inset_0_0_0_1px_#e2eaf3]">
      <ExplorerIcon className="h-8 w-9" />
    </button>
    <button aria-label="Google Chrome" className="flex w-[62px] items-center justify-center">
      <ChromeIcon className="size-8" />
    </button>
    <button aria-label="Firefox" className="flex w-[62px] items-center justify-center">
      <FirefoxIcon id="task" className="size-[31px]" />
    </button>
    <div className="ml-auto flex items-center gap-2">
      <button aria-label="Show hidden icons" className="mr-1">
        <svg viewBox="0 0 8 4" className="h-1 w-2" aria-hidden="true">
          <path d="M0 4 L4 0 L8 4 Z" fill="#fff" />
        </svg>
      </button>
      <button aria-label="Virtual machine tools" className="mr-1.5">
        <svg viewBox="0 0 16 16" className="size-4" aria-hidden="true">
          <path d="M3 4 L10 2 L13 5 V15 L6 15.500 L3 13 Z" fill="#62b4e6" stroke="#3d7aa8" strokeWidth="0.500" />
          <path d="M3 3 C7 0 13 1 15 3 M1 8 L4 11 L8 9 L14 6" fill="none" stroke="#dcb35c" strokeWidth="1.800" />
          <path d="M4 4 H11 V8 L6 10 Z" fill="#e4f1fa" />
          <path d="M5.500 5 L8 6.500 L10 4.500" fill="none" stroke="#3c688c" />
          <path d="M6 12 L10 10 L9 14 Z" fill="#f4fafe" />
        </svg>
      </button>
      <button aria-label="Action Center">
        <svg viewBox="0 0 16 16" className="size-4" aria-hidden="true">
          <path d="M1 1 V15.500" stroke="#fff" strokeWidth="1.600" />
          <path d="M2.500 2 H7 L8 3.500 H13 V9 H8 L7 8 H2.500 Z" fill="#fff" />
          <ErrorBadge />
        </svg>
      </button>
      <button aria-label="Network">
        <svg viewBox="0 0 16 16" className="size-4" aria-hidden="true">
          <rect x="5" y="3.500" width="10.200" height="8" fill="#71839c" stroke="#fff" strokeWidth="1.400" />
          <path d="M10 12 V14.500 M6 14.800 H14" stroke="#fff" strokeWidth="1.400" />
          <path d="M1 1 V4 Q1 6 3 6 Q5 6 5 4 V1 M3 0.500 V4 M3 6 V14.500 H7" fill="none" stroke="#fff" strokeWidth="1.200" />
        </svg>
      </button>
      <button aria-label="Volume">
        <svg viewBox="0 0 16 16" className="size-4" aria-hidden="true">
          <path d="M0.500 5.500 H3 L7.500 1 V15 L3 10.500 H0.500 Z" fill="#fff" />
          <path d="M3 5.500 V10.500" stroke="#8194ad" />
          <ErrorBadge />
        </svg>
      </button>
      <div className="flex self-stretch">
        <button className="w-[70px] text-center leading-[17px] text-white">
          4:49 AM
          <br />
          9/3/2023
        </button>
        <button aria-label="Show desktop" className="w-[14px] border border-[#4d5d73] bg-linear-to-b from-[#8d9db2] via-[#64758c] to-[#8c9eb6] shadow-[inset_0_0_0_1px_#a7b6c9]" />
      </div>
    </div>
  </footer>
);

export default function App() {
  return (
    <div className="flex h-screen flex-col overflow-hidden font-['Noto_Sans','Open_Sans',sans-serif] text-[11px]">
      <div className="relative min-h-0 flex-1 overflow-hidden">
        <Wallpaper />
        <div className="absolute top-2 left-0.5 flex flex-col">
          <DesktopItem label="My Computer">
            <ComputerIcon id="desktop" className="size-12" />
          </DesktopItem>
          <DesktopItem label="Firefox" shortcut>
            <FirefoxIcon id="desk" className="size-12" />
          </DesktopItem>
          <DesktopItem label="Google Chrome" shortcut>
            <ChromeIcon className="size-12" />
          </DesktopItem>
        </div>
        <div className="absolute right-3 -bottom-[7px]">
          <DesktopItem label="Recycle Bin">
            <RecycleBinIcon className="size-12" />
          </DesktopItem>
        </div>
        <ExplorerWindow />
        <svg viewBox="0 0 12 19" className="pointer-events-none absolute top-0 left-0 h-[19px] w-3" aria-hidden="true">
          <path d="M1 1 V15.500 L4.500 12.500 L7 18 L9.300 17 L7 11.700 H11.500 Z" fill="#fff" stroke="#000" strokeWidth="0.900" />
        </svg>
      </div>
      <Taskbar />
    </div>
  );
}
